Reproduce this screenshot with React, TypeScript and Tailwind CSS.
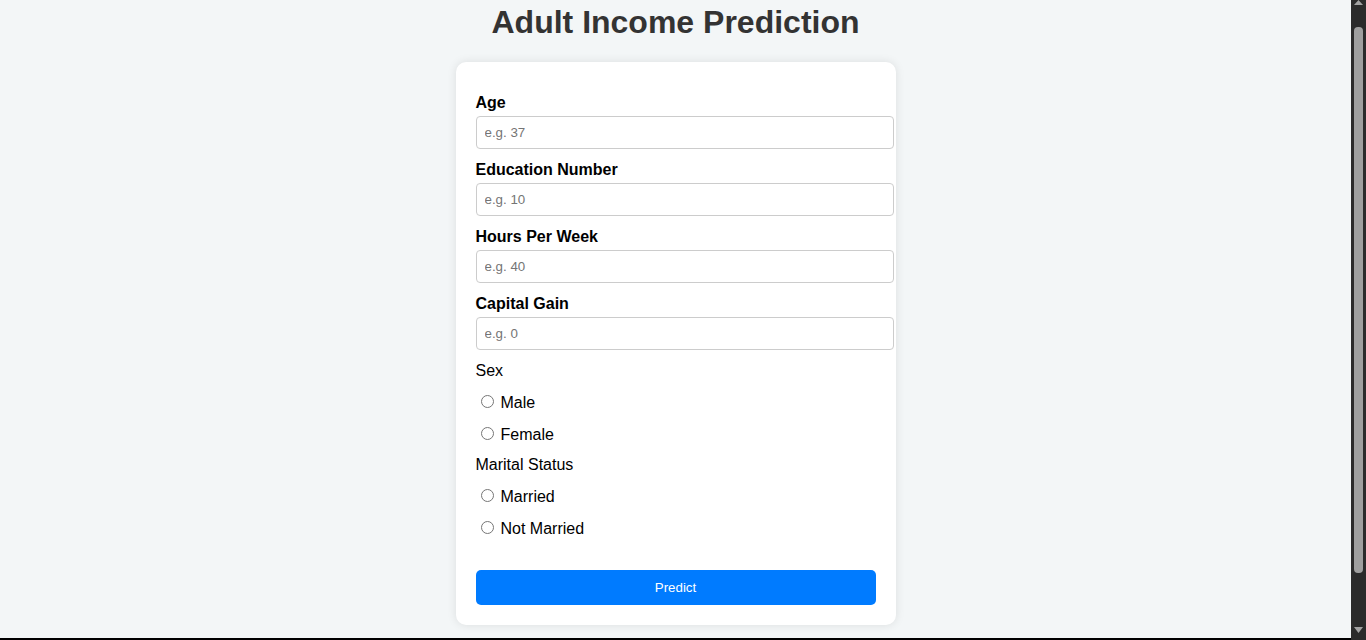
import React from "react";

const fields = [
  { label: "Age", ph: "e.g. 37" },
  { label: "Education Number", ph: "e.g. 10" },
  { label: "Hours Per Week", ph: "e.g. 40" },
  { label: "Capital Gain", ph: "e.g. 0" },
];

function Radio({ name, label, className }: { name: string; label: string; className: string }) {
  return (
    <label className={`flex items-start h-[18px] leading-[18px] text-[16px] text-black ${className}`}>
      <input type="radio" name={name} className="mt-[1px] ml-[5px] mr-[7px] w-[13px] h-[13px]" />
      <span>{label}</span>
    </label>
  );
}

export default function App() {
  return (
    <div
      className="flex h-[640px] w-full overflow-hidden"
      style={{ fontFamily: '"Liberation Sans", Arial, sans-serif' }}
    >
      <main className="flex-1 h-[640px] bg-[#f3f6f7] border-b-[2px] border-black flex flex-col items-center">
        <h1 className="pt-[4px] mb-[21px] text-[32px] leading-[37px] font-bold text-[#333333] text-center">
          Adult Income Prediction
        </h1>
        <div className="w-[440px] bg-white rounded-[10px] shadow-[0_0_10px_rgba(0,0,0,0.1)] p-5 flex flex-col">
          {fields.map((f) => (
            <div key={f.label} className="flex flex-col">
              <label className="block mt-[12px] mb-[4px] text-[16px] leading-[18px] font-bold text-black">
                {f.label}
              </label>
              <input
                type="number"
                placeholder={f.ph}
                className="box-border w-[418px] h-[33px] px-2 border border-[#cccccc] rounded-[4px] text-[13.33px] text-black bg-white placeholder:text-[#757575] outline-none"
              />
            </div>
          ))}
          <div className="mt-[12px] text-[16px] leading-[18px] text-black">Sex</div>
          <Radio name="sex" label="Male" className="mt-[14px]" />
          <Radio name="sex" label="Female" className="mt-[14px]" />
          <div className="mt-[12px] text-[16px] leading-[18px] text-black">Marital Status</div>
          <Radio name="marital" label="Married" className="mt-[14px]" />
          <Radio name="marital" label="Not Married" className="mt-[14px]" />
          <button
            type="button"
            className="mt-[32px] w-full h-[35px] bg-[#007bff] text-white text-[13.33px] rounded-[5px]"
          >
            Predict
          </button>
        </div>
      </main>
      <div className="w-[15px] h-[640px] bg-[#2b2b2b] flex flex-col items-center">
        <svg width="9" height="5" viewBox="0 0 9 5">
          <polygon points="4.5,0 9,5 0,5" fill="#a3a3a3" />
        </svg>
        <div className="mt-[22px] w-[9px] h-[546px] rounded-[4px] bg-[#9f9f9f]" />
        <div className="flex-1" />
        <svg width="9" height="6" viewBox="0 0 9 6" className="mb-[7px]">
          <polygon points="0,0 9,0 4.5,6" fill="#a3a3a3" />
        </svg>
      </div>
    </div>
  );
}
